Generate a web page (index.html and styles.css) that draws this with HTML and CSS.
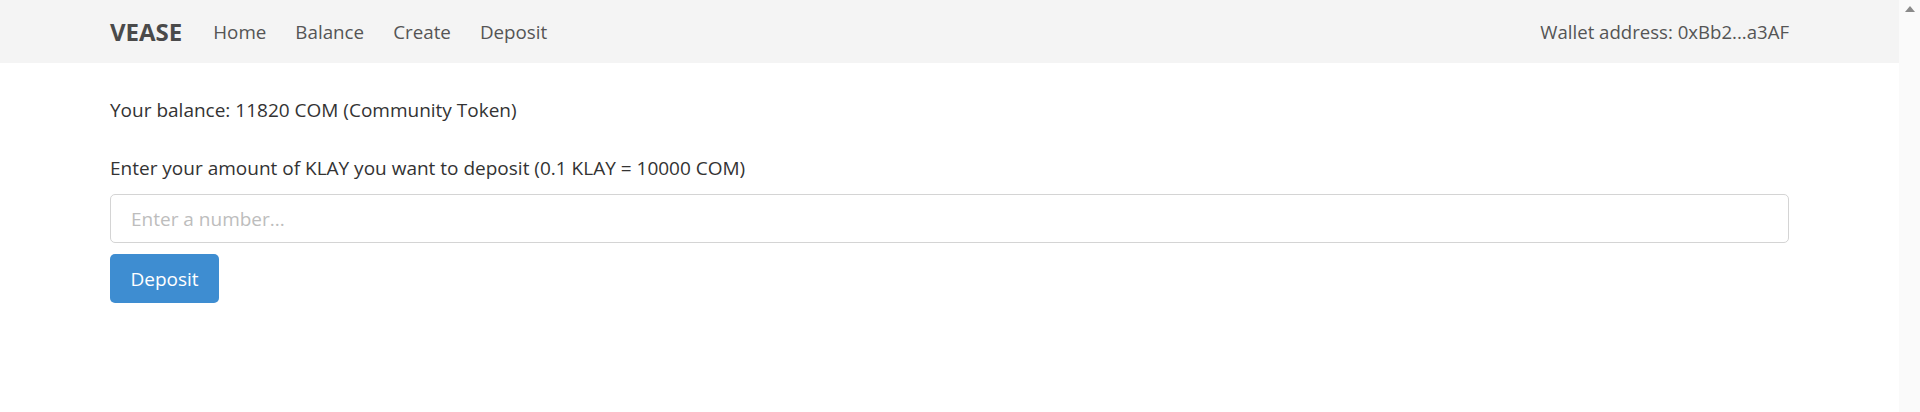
FILE: index.html
```html
<!DOCTYPE html>
<html lang="en">
<head>
<meta charset="utf-8">
<title>VEASE - Deposit</title>
<link rel="stylesheet" href="styles.css">
</head>
<body>
<div class="window">
  <div class="page">
    <nav class="navbar">
      <a class="brand" href="#">VEASE</a>
      <ul class="nav-links">
        <li><a href="#">Home</a></li>
        <li><a href="#">Balance</a></li>
        <li><a href="#">Create</a></li>
        <li><a href="#">Deposit</a></li>
      </ul>
      <span class="wallet">Wallet address: 0xBb2...a3AF</span>
    </nav>
    <main class="content">
      <p class="balance">Your balance: 11820 COM (Community Token)</p>
      <label class="amount-label" for="amount">Enter your amount of KLAY you want to deposit (0.1 KLAY = 10000 COM)</label>
      <input id="amount" class="amount-input" type="text" placeholder="Enter a number...">
      <button class="btn-deposit" type="button">Deposit</button>
    </main>
  </div>
  <div class="scrollbar"><span class="arrow-up"></span></div>
</div>
</body>
</html>
```

FILE: styles.css
```css
html, body {
  margin: 0;
  padding: 0;
  height: 100%;
  overflow: hidden;
  background: #fff;
}
body {
  font-family: "Open Sans", "Noto Sans", sans-serif;
  font-size: 19px;
  color: #333;
}
.window {
  display: flex;
  height: 412px;
}
.page {
  flex: 1;
  min-width: 0;
}
.navbar {
  height: 63px;
  background: #f4f4f4;
  display: flex;
  align-items: center;
  padding: 0 110px;
  box-sizing: border-box;
}
.brand {
  font-size: 24px;
  font-weight: bold;
  color: #4a4a4a;
  text-decoration: none;
  margin-right: 31px;
}
.nav-links {
  list-style: none;
  display: flex;
  gap: 29px;
  margin: 0;
  padding: 0;
  flex: 1;
}
.nav-links a {
  display: block;
  color: #555;
  font-size: 18.8px;
  text-decoration: none;
}
.wallet {
  color: #555;
  font-size: 18.6px;
}
.content {
  padding: 34px 110px 0;
  display: flex;
  flex-direction: column;
  align-items: flex-start;
}
.balance {
  margin: 0;
  line-height: 26px;
}
.amount-label {
  margin-top: 32px;
  line-height: 26px;
}
.amount-input {
  margin-top: 13px;
  width: 100%;
  box-sizing: border-box;
  height: 49px;
  border: 1px solid #d4d4d4;
  border-radius: 5px;
  padding: 0 20px;
  font: inherit;
  color: #555;
  outline: none;
}
.amount-input::placeholder {
  color: #bdbdbd;
}
.btn-deposit {
  margin-top: 11px;
  height: 49px;
  width: 109px;
  border: none;
  border-radius: 5px;
  background: #3e8dd1;
  color: #fff;
  font: inherit;
  padding: 0;
}
.scrollbar {
  width: 21px;
  background: #fafafa;
  display: flex;
  justify-content: center;
  padding-top: 6px;
  box-sizing: border-box;
}
.arrow-up {
  width: 0;
  height: 0;
  border-left: 5px solid transparent;
  border-right: 5px solid transparent;
  border-bottom: 6px solid #8a8a8a;
}
```
